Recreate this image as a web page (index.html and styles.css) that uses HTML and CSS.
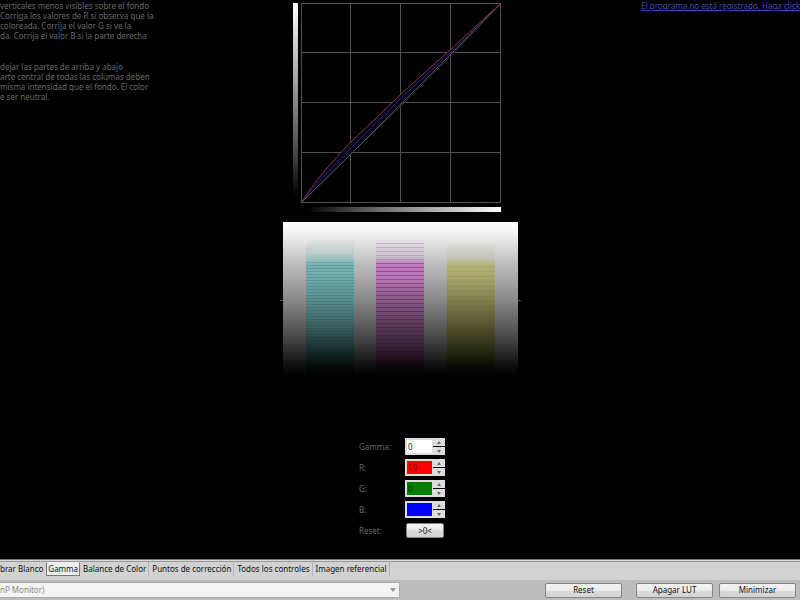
FILE: index.html
```
<!DOCTYPE html>
<html lang="es">
<head>
<meta charset="utf-8">
<title>Gamma</title>
<link rel="stylesheet" href="styles.css">
</head>
<body>
<main class="stage">
  <section class="help">
    <p>verticales menos visibles sobre el fondo<br>Corriga los valores de R si observa que la<br>coloreada. Corrija el valor G si ve la<br>da. Corrija el valor B si la parte derecha</p>
    <p>dejar las partes de arriba y abajo<br>arte central de todas las columas deben<br>misma intensidad que el fondo. El color<br>e ser neutral.</p>
  </section>
  <section class="center">
    <div class="chart">
      <div class="ramp-y"></div>
      <svg class="plot" viewBox="0 0 200 200" aria-hidden="true">
        <path class="grid" d="M.5.5h199v199H.5zM49.5 0v200M99.5 0v200M149.5 0v200M0 49.5h200M0 99.5h200M0 149.5h200"/>
        <path class="fill" d="M0 200Q20 169 49 140L100 91 149 47 200 0L100 100Z"/>
        <path class="blue" d="M0 200Q25 169 49 146L100 95 150 49 200 1"/>
        <path class="green" d="M0 200L50 151 100 103 150 53 200 0"/>
        <path class="neutral" d="M0 200L50 151 100 101 150 51 200 0"/>
        <path class="red" d="M0 200Q20 169 49 140L100 91 149 47 200 0"/>
      </svg>
      <div class="ramp-x"></div>
    </div>
    <div class="pattern-row">
      <span class="tick"></span>
      <div class="pattern">
        <div class="band cyan"></div>
        <div class="band magenta"></div>
        <div class="band yellow"></div>
      </div>
      <span class="tick"></span>
    </div>
    <form class="controls">
      <label for="gamma">Gamma:</label>
      <div class="spin"><input id="gamma" class="value" value="0"><button type="button" class="up" aria-label="+"></button><button type="button" class="down" aria-label="-"></button></div>
      <label for="r">R:</label>
      <div class="spin"><input id="r" class="value r" value="19"><button type="button" class="up" aria-label="+"></button><button type="button" class="down" aria-label="-"></button></div>
      <label for="g">G:</label>
      <div class="spin"><input id="g" class="value g" value="0"><button type="button" class="up" aria-label="+"></button><button type="button" class="down" aria-label="-"></button></div>
      <label for="b">B:</label>
      <div class="spin"><input id="b" class="value b" value=""><button type="button" class="up" aria-label="+"></button><button type="button" class="down" aria-label="-"></button></div>
      <label for="zero">Reset:</label>
      <button type="button" id="zero" class="btn zero">&gt;0&lt;</button>
    </form>
  </section>
  <aside class="notice"><a href="#">El programa no está registrado. Haga click</a></aside>
</main>
<footer class="bar">
  <nav class="tabs">
    <button type="button" class="tab">brar Blanco</button>
    <button type="button" class="tab active">Gamma</button>
    <button type="button" class="tab">Balance de Color</button>
    <button type="button" class="tab">Puntos de corrección</button>
    <button type="button" class="tab">Todos los controles</button>
    <button type="button" class="tab">Imagen referencial</button>
  </nav>
  <div class="actions">
    <div class="monitor">
      <select aria-label="Monitor" disabled><option>nP Monitor)</option></select>
      <svg class="arrow" viewBox="0 0 6 4" aria-hidden="true"><path d="M0 0h6L3 4z"/></svg>
    </div>
    <div class="buttons">
      <button type="button" class="btn wide reset">Reset</button>
      <button type="button" class="btn wide">Apagar LUT</button>
      <button type="button" class="btn wide">Minimizar</button>
    </div>
  </div>
</footer>
</body>
</html>
```
FILE: styles.css
```
* { box-sizing: border-box; }

body {
  margin: 0;
  min-height: 100vh;
  display: flex;
  flex-direction: column;
  background: #000;
  font: 8px/10px "Noto Sans", sans-serif;
}

button, input, select { font: inherit; margin: 0; padding: 0; border: 0; border-radius: 0; }

.stage {
  flex: 1;
  display: grid;
  grid-template-columns: 1fr 242px 1fr;
}

.help { color: #686868; white-space: nowrap; }
.help p { margin: 1px 0 21px; }

.notice { padding-top: 1px; text-align: right; white-space: nowrap; }
.notice a { color: #4848b0; }

.center { display: flex; flex-direction: column; align-items: center; }

.chart {
  display: grid;
  grid-template-columns: 5px 200px;
  grid-template-rows: 200px 5px;
  gap: 4px 3px;
  margin-top: 3px;
  margin-right: 6px;
}
.ramp-y { background: linear-gradient(#fff, #aaa 35%, #555 70%, #000 97%); }
.ramp-x { grid-column: 2; background: linear-gradient(90deg, #000 3%, #555 30%, #aaa 65%, #fff); }
.plot { display: block; width: 100%; overflow: visible; }
.plot path { fill: none; stroke-width: 1; }
.plot .grid { stroke: #505050; }
.plot .fill { fill: #060618; }
.plot .blue { stroke: #202078; }
.plot .green { stroke: #164020; }
.plot .neutral { stroke: #505060; }
.plot .red { stroke: #963040; }

.pattern-row { display: flex; align-items: center; margin-top: 10px; }
.tick { width: 3px; height: 1px; background: #555; }
.pattern {
  display: flex;
  justify-content: space-between;
  width: 235px;
  height: 156px;
  padding: 0 23px;
  background: linear-gradient(#fff, #f0f0f0 8%, #bdbdbd 27%, #8b8b8b 49%, #474747 74%, #0c0c0c 93%, #000);
}
.band { width: 48px; }
.cyan {
  background:
    repeating-linear-gradient(transparent 0 2px, #00333328 2px 3px) 0 38px / 100% 87px no-repeat,
    linear-gradient(#a9cbc900 10%, #a9cbc980 20%, #8fbdbc 25%, #75b3b3 28%, #72b0af 33%, #5a9291 49%, #385d5c 68%, #162a2a 83%, #050808 93%, #000);
}
.magenta {
  background:
    repeating-linear-gradient(transparent 0 3px, #3b003b55 3px 4px) 0 38px / 100% 106px no-repeat,
    repeating-linear-gradient(transparent 0 3px, #80708055 3px 4px) 0 18px / 100% 20px no-repeat,
    linear-gradient(#d0bbd000 10%, #d0bbd0a0 22%, #c28fc0 26%, #c279c0 28%, #b675b4 36%, #875985 50%, #50354f 70%, #231522 86%, #080508 93%, #000);
}
.yellow {
  background:
    repeating-linear-gradient(transparent 0 4px, #44440018 4px 5px) 0 40px / 100% 80px no-repeat,
    linear-gradient(#c5c5a900 12%, #c5c5a980 23%, #b3b374 28%, #a6a66c 36%, #80804f 50%, #4b4b29 70%, #1b1b0b 87%, #070703 93%, #000);
}

.controls {
  display: grid;
  grid-template-columns: 46px 40px;
  grid-auto-rows: 17px;
  row-gap: 4px;
  align-items: center;
  margin-top: 60px;
  margin-right: -4px;
  color: #686868;
}
.spin {
  display: grid;
  grid-template: 1fr 1fr / 28px 12px;
  gap: 1px 0;
  height: 17px;
}
.value {
  grid-row: 1 / 3;
  width: 28px;
  height: 17px;
  padding-left: 1px;
  border: 2px solid #ddd;
  border-right-width: 1px;
  background: #fff;
  color: #222;
}
.r { background: #f00; color: #801010; }
.g { background: #008000; color: #003800; }
.b { background: #00f; }
.up, .down { display: grid; place-items: center; background: #ddd; }
.up::before, .down::before { content: ""; border: 2px solid transparent; border-top-width: 0; border-bottom: 3px solid #666; }
.down::before { transform: rotate(180deg); }

.btn {
  height: 15px;
  border: 1px solid #858585;
  border-radius: 2px;
  background: linear-gradient(#f3f3f3, #eaeaea 50%, #dadada 50%, #d4d4d4);
  color: #111;
}
.zero { width: 38px; margin-left: 1px; }

.bar { border-top: 1px solid #777; box-shadow: inset 0 1px #d8d8d8, inset 0 2px #999; background: #bcbcbc; }
.tabs {
  display: flex;
  height: 18px;
  margin-top: 2px;
  background: #d2d2d2;
  white-space: nowrap;
}
.tab {
  height: 14px;
  padding: 0 2px 0 3px;
  border-right: 1px solid #b4b4b4;
  background: none;
  color: #111;
}
.tab:first-child { padding: 0 3px 0 0; border-right: 0; }
.tab.active { padding: 0 1px; border: 1px solid #777; border-top-color: #eee; background: #eee; }

.actions { display: grid; grid-template-columns: 1fr 1fr; align-items: center; height: 20px; }
.monitor { position: relative; }
.monitor select {
  display: block;
  appearance: none;
  width: 100%;
  height: 16px;
  border: 1px solid #aaa;
  border-left: 0;
  border-radius: 0 2px 2px 0;
  background: #f4f4f4;
  color: #888;
  opacity: 1;
}
.arrow { position: absolute; right: 4px; top: 6px; width: 6px; height: 4px; fill: #999; }
.buttons { display: flex; justify-content: flex-end; gap: 6px; padding-right: 4px; }
.wide { width: 77px; }
.reset { margin-right: 8px; }
```
